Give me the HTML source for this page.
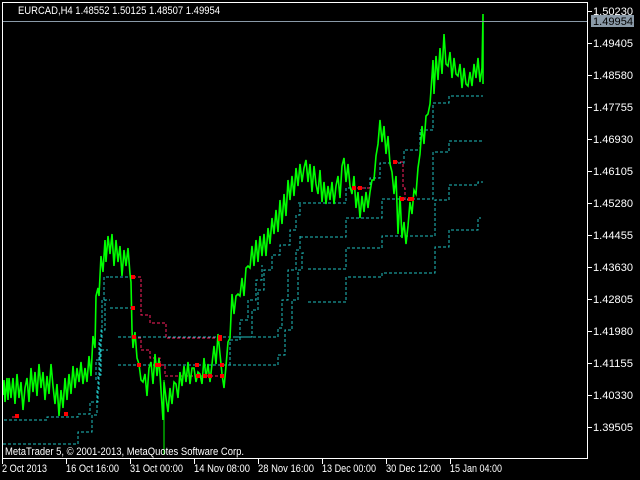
<!DOCTYPE html>
<html><head><meta charset="utf-8"><style>
html,body{margin:0;padding:0;background:#000;width:640px;height:480px;overflow:hidden}
svg{display:block}
text{font-family:"Liberation Sans",sans-serif;font-size:11px;fill:#fff}
</style></head><body>
<svg width="640" height="480" viewBox="0 0 640 480" xmlns="http://www.w3.org/2000/svg">
<rect width="640" height="480" fill="#000"/>
<g fill="none" stroke="#20c0c0" stroke-width="1" stroke-dasharray="3,2">
<path d="M3,444 H78 V432 H92 V415 H97 V390 H99 V340 H102 V300 H104 V277 H110"/>
<path d="M4,420 H47 V417 H78 V414 H90 V402 H98 V375 H101 V330 H105 V300 H110"/>
<path d="M110,277 H133"/>
<path d="M110,308 H133"/>
<path d="M118,337 H278 V328 H282 V300 H288 V270 H296 V250 H300 V236 H302"/>
<path d="M118,365 H278 V355 H285 V330 H292 V300 H298 V270 H302 V253 H305"/>
<path d="M96,380 V360 H100 V350 H108"/>
<path d="M100,376 V340 H104"/>
<path d="M235,337 H252 V310 H258 V290 H264 V270 H272 V255 H280 V245 H290 V230 H296 V215 H300 V203"/>
<path d="M230,365 V340 H240 V320 H248 V300 H256 V280 H262 V265"/>
<path d="M298,203 H346 V188 H370 V178 H380 V163 H404 V150 H420 V130 H433 V103 H449 V96 H483"/>
<path d="M300,237 H346 V218 H382 V199 H433 V152 H449 V141 H483"/>
<path d="M308,269 H346 V248 H382 V236 H435 V200 H449 V185 H478 V182 H483"/>
<path d="M308,302 H346 V277 H382 V273 H435 V247 H449 V230 H478 V218 H481"/>
</g>
<g fill="none" stroke="#ff2060" stroke-width="1" stroke-dasharray="3,2">
<path d="M133,277 H141 V315 H150 V323 H166 V338 H220"/>
<path d="M133,338 H141 V350 H150 V358 H160 V365 H165 V376 H222"/>
<path d="M12,417 H18"/>
<path d="M352,188 H372"/>
<path d="M395,162 H403 V188 H405 V200 H412"/>
</g>
<polyline fill="none" stroke="#00ff00" stroke-width="1.6" stroke-linejoin="miter" points="
3,395 4,380 5,402 7,378 8,400 9,378 11,398 13,378 15,404 17,374 19,398 21,382 23,410 25,388 27,378 29,402 31,368 33,392 35,372 37,396 39,364 41,388 43,372 45,400 47,376 49,394 51,364 53,386 55,404 57,384 59,416 61,390 63,408 65,378 67,400 69,374 71,394 73,366 75,388 77,368 79,382 81,362 83,384 85,368 87,382 89,356 91,376 93,336 95,348 96,296 98,288 99,296 101,256 103,272 105,240 106,262 108,236 110,254 112,234 114,266 116,240 118,262 120,246 122,276 124,250 126,266 128,248 130,274 131,282 132,330 133,348 135,332 137,358 139,364 141,380 143,382 145,374 147,396 149,368 151,362 153,384 155,354 157,376 159,358 161,390 163,420 164,382 166,398 168,412 170,388 172,404 174,382 176,384 178,398 180,372 182,386 184,366 186,382 188,362 190,384 192,368 194,368 196,382 198,372 200,374 202,384 204,358 206,378 208,364 210,382 212,364 214,346 216,364 218,334 220,354 222,374 224,388 226,366 228,342 230,338 232,294 234,314 236,296 238,294 240,296 242,278 244,296 246,268 248,266 250,268 252,246 254,266 256,240 258,262 260,236 262,256 264,234 266,256 268,228 270,244 272,218 274,234 276,210 278,232 280,200 282,224 284,194 286,216 288,180 290,200 292,176 294,196 296,168 298,186 300,164 302,182 304,168 306,160 308,182 310,164 312,192 314,166 316,184 318,194 320,170 322,202 324,182 326,204 328,186 330,200 332,182 334,204 336,186 338,176 340,198 342,166 344,158 346,182 348,164 350,186 352,194 354,176 356,208 358,192 360,218 362,196 364,212 366,192 368,208 370,192 372,180 374,180 376,156 378,144 380,120 382,142 384,126 386,154 388,136 390,164 392,172 394,194 396,176 398,234 400,196 402,238 404,222 406,244 408,226 410,202 412,214 414,190 416,194 418,168 420,154 422,126 424,144 426,116 428,114 430,104 432,76 433,60 434,94 436,56 438,80 440,48 442,74 444,34 446,64 448,66 450,52 452,78 454,58 456,74 458,76 460,64 462,88 464,68 466,84 468,86 470,72 472,86 474,64 476,78 478,58 480,82 482,68 483,14 483,84"/>
<line x1="164" y1="380" x2="164" y2="455" stroke="#00ff00" stroke-width="1"/>
<g fill="#ff0000">
<rect x="15" y="414" width="4" height="4"/>
<rect x="64" y="412" width="4" height="4"/>
<rect x="131" y="275" width="4" height="4"/>
<rect x="131" y="306" width="4" height="4"/>
<rect x="132" y="335" width="4" height="4"/>
<rect x="137" y="363" width="4" height="4"/>
<rect x="155" y="363" width="6" height="4"/>
<rect x="195" y="363" width="4" height="4"/>
<rect x="196" y="374" width="4" height="4"/>
<rect x="203" y="374" width="4" height="4"/>
<rect x="208" y="374" width="4" height="4"/>
<rect x="218" y="335" width="4" height="6"/>
<rect x="220" y="363" width="4" height="4"/>
<rect x="220" y="374" width="4" height="4"/>
<rect x="352" y="186" width="4" height="4"/>
<rect x="358" y="186" width="4" height="4"/>
<rect x="393" y="160" width="4" height="4"/>
<rect x="400" y="197" width="4" height="4"/>
<rect x="408" y="197" width="6" height="4"/>
</g>
<rect x="2.5" y="2.5" width="585" height="456" fill="none" stroke="#fff" stroke-width="1"/>
<line x1="3" y1="21.5" x2="587" y2="21.5" stroke="#8a9aa8" stroke-width="1"/>
<text x="18" y="14" textLength="202" lengthAdjust="spacingAndGlyphs">EURCAD,H4  1.48552 1.50125 1.48507 1.49954</text>
<text x="5" y="455" textLength="239" lengthAdjust="spacingAndGlyphs">MetaTrader 5, © 2001-2013, MetaQuotes Software Corp.</text>
<g stroke="#fff" stroke-width="1">
<line x1="588" y1="11.5" x2="592" y2="11.5"/><line x1="588" y1="43.5" x2="592" y2="43.5"/><line x1="588" y1="75.5" x2="592" y2="75.5"/><line x1="588" y1="107.5" x2="592" y2="107.5"/><line x1="588" y1="139.5" x2="592" y2="139.5"/><line x1="588" y1="171.5" x2="592" y2="171.5"/><line x1="588" y1="203.5" x2="592" y2="203.5"/><line x1="588" y1="235.5" x2="592" y2="235.5"/><line x1="588" y1="267.5" x2="592" y2="267.5"/><line x1="588" y1="299.5" x2="592" y2="299.5"/><line x1="588" y1="331.5" x2="592" y2="331.5"/><line x1="588" y1="363.5" x2="592" y2="363.5"/><line x1="588" y1="395.5" x2="592" y2="395.5"/><line x1="588" y1="427.5" x2="592" y2="427.5"/>
<line x1="2.5" y1="459" x2="2.5" y2="464"/><line x1="66.5" y1="459" x2="66.5" y2="464"/><line x1="130.5" y1="459" x2="130.5" y2="464"/><line x1="194.5" y1="459" x2="194.5" y2="464"/><line x1="258.5" y1="459" x2="258.5" y2="464"/><line x1="322.5" y1="459" x2="322.5" y2="464"/><line x1="386.5" y1="459" x2="386.5" y2="464"/><line x1="450.5" y1="459" x2="450.5" y2="464"/>
</g>
<g>
<text x="593" y="15" textLength="40" lengthAdjust="spacingAndGlyphs">1.50230</text>
<rect x="591" y="15" width="43" height="12" fill="#8a9aa8"/>
<text x="593" y="25" style="fill:#000" textLength="40" lengthAdjust="spacingAndGlyphs">1.49954</text>
<text x="593" y="47" textLength="40" lengthAdjust="spacingAndGlyphs">1.49405</text>
<text x="593" y="79" textLength="40" lengthAdjust="spacingAndGlyphs">1.48580</text>
<text x="593" y="111" textLength="40" lengthAdjust="spacingAndGlyphs">1.47755</text>
<text x="593" y="143" textLength="40" lengthAdjust="spacingAndGlyphs">1.46930</text>
<text x="593" y="175" textLength="40" lengthAdjust="spacingAndGlyphs">1.46105</text>
<text x="593" y="207" textLength="40" lengthAdjust="spacingAndGlyphs">1.45280</text>
<text x="593" y="239" textLength="40" lengthAdjust="spacingAndGlyphs">1.44455</text>
<text x="593" y="271" textLength="40" lengthAdjust="spacingAndGlyphs">1.43630</text>
<text x="593" y="303" textLength="40" lengthAdjust="spacingAndGlyphs">1.42805</text>
<text x="593" y="335" textLength="40" lengthAdjust="spacingAndGlyphs">1.41980</text>
<text x="593" y="367" textLength="40" lengthAdjust="spacingAndGlyphs">1.41155</text>
<text x="593" y="399" textLength="40" lengthAdjust="spacingAndGlyphs">1.40330</text>
<text x="593" y="431" textLength="40" lengthAdjust="spacingAndGlyphs">1.39505</text>
</g>
<g>
<text x="2" y="472" textLength="45" lengthAdjust="spacingAndGlyphs">2 Oct 2013</text>
<text x="66" y="472" textLength="53" lengthAdjust="spacingAndGlyphs">16 Oct 16:00</text>
<text x="130" y="472" textLength="53" lengthAdjust="spacingAndGlyphs">31 Oct 00:00</text>
<text x="194" y="472" textLength="56" lengthAdjust="spacingAndGlyphs">14 Nov 08:00</text>
<text x="258" y="472" textLength="56" lengthAdjust="spacingAndGlyphs">28 Nov 16:00</text>
<text x="322" y="472" textLength="54" lengthAdjust="spacingAndGlyphs">13 Dec 00:00</text>
<text x="386" y="472" textLength="55" lengthAdjust="spacingAndGlyphs">30 Dec 12:00</text>
<text x="450" y="472" textLength="52" lengthAdjust="spacingAndGlyphs">15 Jan 04:00</text>
</g>
</svg>
</body></html>
